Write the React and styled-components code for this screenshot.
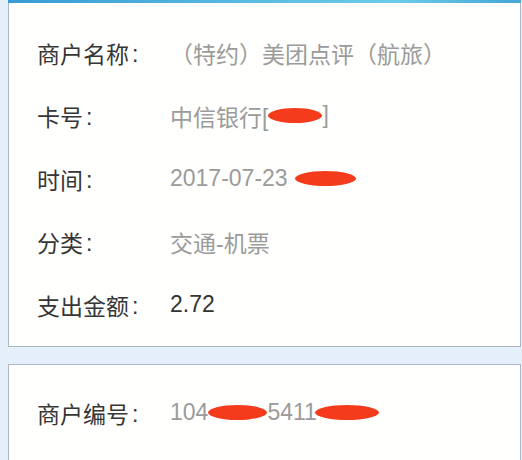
import styled, { createGlobalStyle } from "styled-components";

const GlobalStyle = createGlobalStyle`
  html, body {
    margin: 0;
    padding: 0;
    background: #e5effa;
  }
  body {
    font-family: "Liberation Sans", "Noto Sans CJK SC", sans-serif;
  }
`;

const detail = [
  { label: "商户名称", value: ["（特约）美团点评（航旅）"] },
  { label: "卡号", value: ["中信银行[", { w: 54 }, "]"] },
  { label: "时间", value: ["2017-07-23", { w: 61, gap: 7 }] },
  { label: "分类", value: ["交通-机票"] },
  { label: "支出金额", value: ["2.72"], dark: true },
];

const merchant = [{ label: "商户编号", value: ["104", { w: 59 }, "5411", { w: 64, gap: -2 }] }];

const InfoRow = ({ label, value, dark }) => (
  <Row>
    <Label>
      {label}
      <Colon>:</Colon>
    </Label>
    <Value $dark={dark}>
      {value.map((part, i) =>
        typeof part === "string" ? (
          part
        ) : (
          <Redact key={i} $gap={part.gap || 0} style={{ width: part.w }} />
        )
      )}
    </Value>
  </Row>
);

const App = () => {
  return (
    <Page>
      <GlobalStyle />
      <Card $top $padTop={18} $padBottom={10}>
        {detail.map((row) => (
          <InfoRow key={row.label} {...row} />
        ))}
      </Card>
      <Card $padTop={16} $padBottom={0}>
        {merchant.map((row) => (
          <InfoRow key={row.label} {...row} />
        ))}
        <Row>
          <Label>
            交易编号
            <Colon>:</Colon>
          </Label>
        </Row>
      </Card>
    </Page>
  );
};

export default App;

const Page = styled.div`
  height: 460px;
  overflow: hidden;
  padding: 0 1px 0 8px;
  display: flex;
  flex-direction: column;
  gap: 17px;
`;

const Card = styled.div`
  background: #fffffd;
  border: 1px solid #a9b8c7;
  padding: ${(p) => p.$padTop}px 0 ${(p) => p.$padBottom}px 28px;
  position: relative;
  flex-shrink: 0;

  ${(p) =>
    p.$top &&
    `
    border-top: none;
    padding-top: ${p.$padTop + 3}px;
    &::before {
      content: "";
      position: absolute;
      left: -1px;
      right: -1px;
      top: 0;
      height: 3px;
      background: linear-gradient(90deg, #3a9bd4, #58b9e2 45%, #6ccbe8 75%, #45a6d8);
    }
  `}
`;

const Row = styled.div`
  height: 63px;
  display: flex;
  align-items: center;
  font-size: 23px;
`;

const Label = styled.div`
  width: 133px;
  flex-shrink: 0;
  color: #363636;
  white-space: nowrap;
`;

const Colon = styled.span`
  margin-left: 3px;
  position: relative;
  top: -1px;
`;

const Value = styled.div`
  color: ${(p) => (p.$dark ? "#333333" : "#9b9b9b")};
  white-space: nowrap;
  display: flex;
  align-items: center;
`;

const Redact = styled.span`
  display: inline-block;
  height: 15px;
  margin-left: ${(p) => p.$gap}px;
  border-radius: 50%;
  background: #f43c1d;
`;
